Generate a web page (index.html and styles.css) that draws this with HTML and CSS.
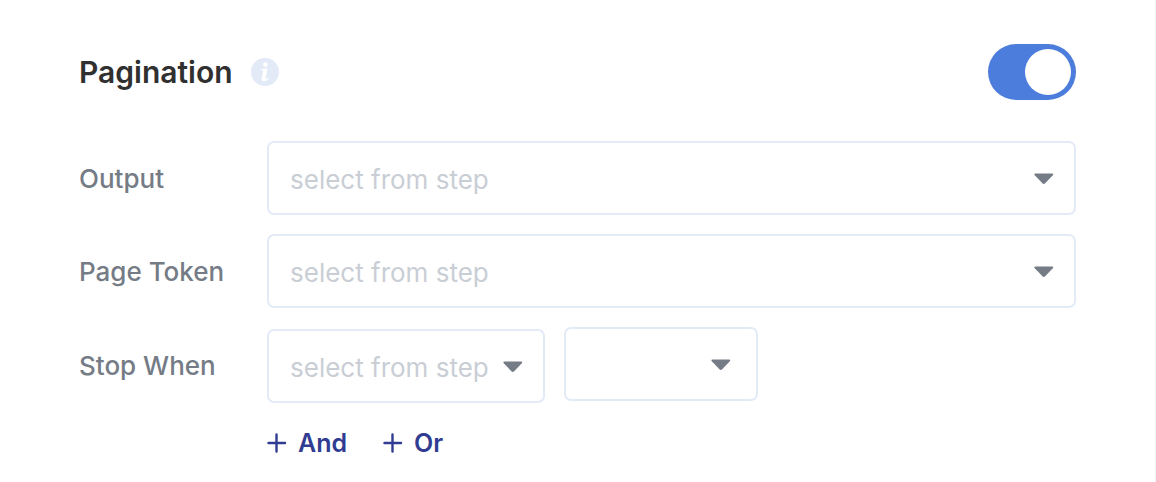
FILE: index.html
```html
<!DOCTYPE html>
<html lang="en">
<head>
<meta charset="utf-8">
<title>Pagination</title>
<link rel="stylesheet" href="styles.css">
</head>
<body>
<main class="panel">
  <header class="panel-header">
    <h1 class="title">Pagination</h1>
    <svg class="info" viewBox="0 0 28 28" role="img" aria-label="Information">
      <circle class="info-disc" cx="14" cy="14" r="14"/>
      <circle class="info-mark" cx="14.4" cy="6.6" r="2.3"/>
      <path class="info-mark" d="M9.8 11.2Q13 10.6 16.6 10.4L14.4 20.2Q14.2 21.4 15.2 21Q16.2 20.5 16.9 19.6L17.6 20.2Q15.8 23.2 12.7 23.2Q10.1 23.2 10.7 20.3L12.2 13.6Q12.5 12.3 11.3 12.2L9.6 12z"/>
    </svg>
    <input class="toggle" type="checkbox" aria-label="Enable pagination" checked>
  </header>
  <form class="fields">
    <div class="row">
      <label class="label" for="output">Output</label>
      <div class="picker">
        <select class="select" id="output"><option>select from step</option></select>
        <svg class="caret" viewBox="0 0 20 12" aria-hidden="true"><path d="M1.5 .4h16.6q1.9 .2 .7 1.8l-7.6 8.1q-1.4 1.4-2.8 0L.8 2.2Q-.4 .6 1.5 .4z"/></svg>
      </div>
    </div>
    <div class="row">
      <label class="label" for="token">Page Token</label>
      <div class="picker">
        <select class="select" id="token"><option>select from step</option></select>
        <svg class="caret" viewBox="0 0 20 12" aria-hidden="true"><path d="M1.5 .4h16.6q1.9 .2 .7 1.8l-7.6 8.1q-1.4 1.4-2.8 0L.8 2.2Q-.4 .6 1.5 .4z"/></svg>
      </div>
    </div>
    <div class="row">
      <label class="label" for="stop">Stop When</label>
      <div class="condition">
        <div class="picker picker-step">
          <select class="select" id="stop"><option>select from step</option></select>
          <svg class="caret" viewBox="0 0 20 12" aria-hidden="true"><path d="M1.5 .4h16.6q1.9 .2 .7 1.8l-7.6 8.1q-1.4 1.4-2.8 0L.8 2.2Q-.4 .6 1.5 .4z"/></svg>
        </div>
        <div class="picker picker-operator">
          <select class="select" aria-label="Operator"><option></option></select>
          <svg class="caret" viewBox="0 0 20 12" aria-hidden="true"><path d="M1.5 .4h16.6q1.9 .2 .7 1.8l-7.6 8.1q-1.4 1.4-2.8 0L.8 2.2Q-.4 .6 1.5 .4z"/></svg>
        </div>
      </div>
    </div>
    <div class="actions">
      <button class="add" type="button"><svg class="plus" viewBox="0 0 20 20" aria-hidden="true"><path d="M9.5 1.5v17M1.5 10h16.5"/></svg>And</button>
      <button class="add" type="button"><svg class="plus" viewBox="0 0 20 20" aria-hidden="true"><path d="M9.5 1.5v17M1.5 10h16.5"/></svg>Or</button>
    </div>
  </form>
</main>
</body>
</html>
```
FILE: styles.css
```css
* { box-sizing: border-box; }
body {
  margin: 0;
  background: #fff;
  font-family: Inter, "Liberation Sans", sans-serif;
}
.panel {
  min-height: 100vh;
  padding: 44px 79px 20px;
  border-right: 1px solid #f0f4fa;
}
.panel-header {
  display: flex;
  align-items: center;
  margin-bottom: 41px;
}
.title {
  margin: 0;
  color: #303030;
  font-size: 30px;
  line-height: 56px;
  font-weight: 600;
}
.info { width: 28px; height: 28px; margin-left: 18px; }
.info-disc { fill: #e3eaf7; }
.info-mark { fill: #fff; }
.toggle {
  appearance: none;
  display: flex;
  align-items: center;
  width: 88px;
  height: 56px;
  margin: 0 0 0 auto;
  padding: 0 5px;
  border-radius: 28px;
  background: #4c7ddc;
}
.toggle::before {
  content: "";
  width: 46px;
  height: 46px;
  margin-left: auto;
  border-radius: 50%;
  background: #fff;
}
.fields { display: grid; gap: 19px; }
.row {
  display: grid;
  grid-template-columns: 188px 1fr;
  align-items: center;
}
.label {
  padding-top: 2px;
  color: #757c86;
  font-size: 26px;
  line-height: 32px;
  font-weight: 500;
}
.picker { display: grid; align-items: center; }
.picker > * { grid-area: 1 / 1; }
.select {
  appearance: none;
  width: 100%;
  height: 74px;
  padding: 4px 21px 0;
  border: 2px solid #e3eaf8;
  border-radius: 7px;
  background: #fff;
  color: #c9ced5;
  font: 400 26px/32px Inter, "Liberation Sans", sans-serif;
}
.caret {
  justify-self: end;
  width: 20px;
  height: 12px;
  margin: 2px 22px 0 0;
  fill: #757c86;
  pointer-events: none;
}
.condition { display: flex; gap: 19px; }
.picker-step { width: 278px; padding-top: 2px; }
.picker-operator { width: 194px; align-self: flex-start; }
.picker-operator .caret { margin-right: 27px; }
.actions { display: flex; gap: 36px; margin: 5px 0 0 188px; }
.add {
  display: flex;
  align-items: center;
  gap: 11px;
  padding: 0;
  border: 0;
  background: none;
  color: #303c92;
  font: 600 25px/32px Inter, "Liberation Sans", sans-serif;
}
.plus {
  width: 20px;
  height: 20px;
  fill: none;
  stroke: currentColor;
  stroke-width: 2.4;
  stroke-linecap: round;
}
```
